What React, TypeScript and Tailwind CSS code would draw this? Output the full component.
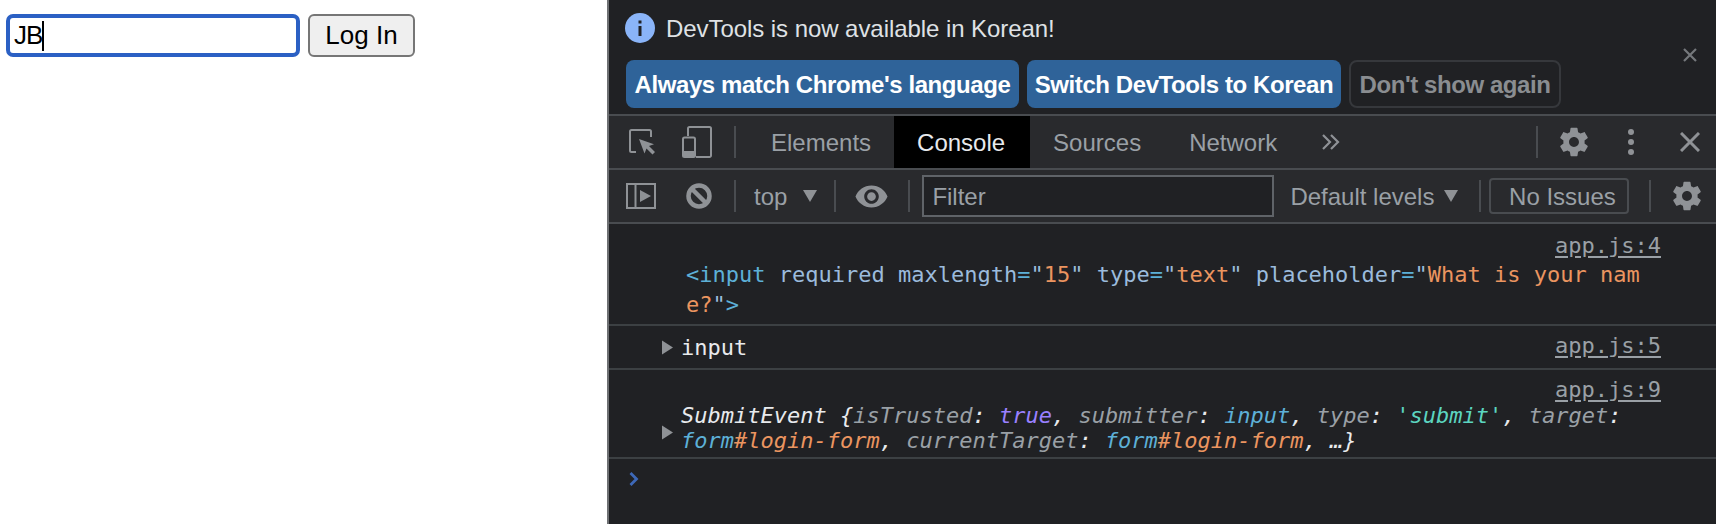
const GEAR =
  'M19.43 12.98c.04-.32.07-.64.07-.98s-.03-.66-.07-.98l2.11-1.65c.19-.15.24-.42.12-.64l-2-3.46c-.12-.22-.39-.3-.61-.22l-2.49 1c-.52-.4-1.08-.73-1.69-.98l-.38-2.65C14.46 2.18 14.25 2 14 2h-4c-.25 0-.46.18-.49.42l-.38 2.65c-.61.25-1.17.59-1.69.98l-2.49-1c-.23-.09-.49 0-.61.22l-2 3.46c-.13.22-.07.49.12.64l2.11 1.65c-.04.32-.07.65-.07.98s.03.66.07.98l-2.11 1.65c-.19.15-.24.42-.12.64l2 3.46c.12.22.39.3.61.22l2.49-1c.52.4 1.08.73 1.69.98l.38 2.65c.03.24.24.42.49.42h4c.25 0 .46-.18.49-.42l.38-2.65c.61-.25 1.17-.59 1.69-.98l2.49 1c.23.09.49 0 .61-.22l2-3.46c.12-.22.07-.49-.12-.64l-2.11-1.65zM12 15.5c-1.93 0-3.5-1.57-3.5-3.5s1.57-3.5 3.5-3.5 3.5 1.57 3.5 3.5-1.57 3.5-3.5 3.5z';

const ICON = '#8f9296';

function Gear({ className }: { className: string }) {
  return (
    <svg viewBox="0 0 24 24" className={className} fill={ICON}>
      <path d={GEAR} />
    </svg>
  );
}

function Divider({ className }: { className: string }) {
  return <div className={`w-[2px] h-[32px] bg-[#494c50] shrink-0 ${className}`} />;
}

function Caret({ className }: { className: string }) {
  return (
    <svg viewBox="0 0 14 12" className={`w-[14px] h-[12px] shrink-0 ${className}`} fill={ICON}>
      <path d="M0 0h14L7 12z" />
    </svg>
  );
}

function Expander({ className }: { className: string }) {
  return (
    <svg viewBox="0 0 11 14" className={`w-[11px] h-[15px] shrink-0 ${className}`} fill="#8f9296">
      <path d="M0 0l11 7-11 7z" />
    </svg>
  );
}

function SourceLink({ children }: { children: string }) {
  return <span className="underline text-[#9aa0a6] leading-[26px] underline-offset-[3px]">{children}</span>;
}

const Tag = ({ children }: { children: string }) => <span className="text-[#5db0d7]">{children}</span>;
const Attr = ({ children }: { children: string }) => <span className="text-[#9bbbdc]">{children}</span>;
const Val = ({ children }: { children: string }) => <span className="text-[#eb9560]">{children}</span>;
const Key = ({ children }: { children: string }) => <span className="text-[#9aa0a6]">{children}</span>;

export default function App() {
  return (
    <div className="flex w-[1716px] h-[524px] overflow-hidden bg-white font-['Liberation_Sans',Arial,sans-serif]">
      {/* Page */}
      <div className="w-[607px] shrink-0 flex items-start gap-[8px] pl-[6px] pt-[14px]">
        <div className="w-[294px] h-[43px] border-[4px] border-[#2b60c4] rounded-[7px] flex items-center pl-[4px] text-[26px] tracking-[-1px] text-black">
          JB
          <span className="w-[2px] h-[30px] bg-black" />
        </div>
        <button className="w-[107px] h-[43px] bg-[#efefef] border-2 border-[#767676] rounded-[6px] text-[26px] text-black">
          Log In
        </button>
      </div>

      {/* DevTools */}
      <div className="flex-1 flex flex-col bg-[#202124] border-l-2 border-[#6e7073]">
        {/* Language infobar */}
        <div className="h-[114px] shrink-0 flex text-[24px]">
          <div className="flex-1 flex flex-col">
            <div className="h-[60px] flex items-center pl-[16px] pb-[4px]">
              <svg viewBox="0 0 30 30" className="w-[30px] h-[30px] shrink-0">
                <circle cx="15" cy="15" r="15" fill="#8ab4f8" />
                <rect x="13.5" y="13" width="3" height="10" fill="#202124" />
                <rect x="13.5" y="7.5" width="3" height="3" fill="#202124" />
              </svg>
              <span className="ml-[11px] mt-[2px] text-[#dfe1e5] tracking-[-0.06px]">DevTools is now available in Korean!</span>
            </div>
            <div className="flex pl-[17px] gap-[8px] font-bold tracking-[-0.42px]">
              <button className="w-[393px] h-[48px] pt-[2px] rounded-[8px] bg-[#2f6399] text-white">Always match Chrome's language</button>
              <button className="w-[314px] h-[48px] pt-[2px] rounded-[8px] bg-[#2f6399] text-white">Switch DevTools to Korean</button>
              <button className="w-[212px] h-[48px] pt-[2px] rounded-[8px] border-2 border-[#36383c] text-[#8a8d91]">Don't show again</button>
            </div>
          </div>
          <svg viewBox="0 0 14 14" className="w-[14px] h-[14px] mt-[48px] mr-[19px]" stroke="#75787c" strokeWidth="2.2">
            <path d="M1 1l12 12M13 1L1 13" />
          </svg>
        </div>

        {/* Main tabs */}
        <div className="h-[56px] shrink-0 flex items-center bg-[#292a2d] border-y-2 border-[#494c50] text-[24px] text-[#9aa0a6]">
          <svg viewBox="0 0 26 26" className="w-[26px] h-[26px] ml-[20px] shrink-0" fill="none">
            <path d="M7 23H2.5a1.5 1.5 0 0 1-1.5-1.5V2.5A1.5 1.5 0 0 1 2.5 1h18A1.5 1.5 0 0 1 22 2.5V8" stroke={ICON} strokeWidth="2" />
            <path d="M10 10l15 5.2-5 1.8 6 6-2.5 2.5-6-6-2 5z" fill={ICON} />
          </svg>
          <svg viewBox="0 0 30 32" className="w-[30px] h-[32px] ml-[27px] shrink-0" fill="none">
            <path d="M6 10V2.5A1.5 1.5 0 0 1 7.5 1h20A1.5 1.5 0 0 1 29 2.5v27a1.5 1.5 0 0 1-1.5 1.5H14" stroke={ICON} strokeWidth="2" />
            <rect x="1" y="11.5" width="12" height="19.5" rx="1.5" stroke={ICON} strokeWidth="2" />
            <path d="M1 25h12v4.5A1.5 1.5 0 0 1 11.500 31h-9A1.500 1.500 0 0 1 1 29.500z" fill={ICON} />
          </svg>
          <Divider className="ml-[22px] mr-[11px]" />
          <div className="pl-6 pr-[23px] pt-[2px] h-full flex items-center">Elements</div>
          <div className="pl-[23px] pr-[25px] pt-[2px] h-full flex items-center bg-black text-[#e8eaed]">Console</div>
          <div className="pl-[23px] pr-6 pt-[2px] h-full flex items-center">Sources</div>
          <div className="px-6 pt-[2px] h-full flex items-center">Network</div>
          <svg viewBox="0 0 18 16" className="w-[18px] h-[16px] ml-[21px] shrink-0" fill="none" stroke={ICON} strokeWidth="2.2">
            <path d="M1 1l7 7-7 7M9 1l7 7-7 7" />
          </svg>
          <Divider className="ml-auto" />
          <Gear className="w-[34px] h-[34px] ml-[19px] shrink-0" />
          <div className="ml-[37px] flex flex-col gap-[4px] shrink-0">
            <div className="w-[6px] h-[6px] rounded-full bg-[#8f9296]" />
            <div className="w-[6px] h-[6px] rounded-full bg-[#8f9296]" />
            <div className="w-[6px] h-[6px] rounded-full bg-[#8f9296]" />
          </div>
          <svg viewBox="0 0 20 20" className="w-[20px] h-[20px] ml-[46px] mr-[16px] shrink-0" stroke={ICON} strokeWidth="3">
            <path d="M1 1l18 18M19 1L1 19" />
          </svg>
        </div>

        {/* Console toolbar */}
        <div className="h-[54px] shrink-0 flex items-center bg-[#292a2d] border-b-2 border-[#494c50] text-[24px] text-[#9aa0a6]">
          <svg viewBox="0 0 30 26" className="w-[30px] h-[26px] ml-[17px] shrink-0" fill="none">
            <rect x="1" y="1" width="28" height="24" stroke={ICON} strokeWidth="2" />
            <path d="M9.500 1v24" stroke={ICON} strokeWidth="2" />
            <path d="M14 7l11 6-11 6z" fill={ICON} />
          </svg>
          <svg viewBox="0 0 26 26" className="w-[26px] h-[26px] ml-[30px] shrink-0" fill="none" stroke={ICON} strokeWidth="4.500">
            <circle cx="13" cy="13" r="10.500" />
            <path d="M5.500 5.500l15 15" />
          </svg>
          <Divider className="ml-[22px]" />
          <span className="ml-[18px] mt-[2px]">top</span>
          <Caret className="ml-[16px]" />
          <Divider className="ml-[17px]" />
          <svg viewBox="0 0 24 24" className="w-[35px] h-[35px] ml-[18px] shrink-0" fill={ICON}>
            <path d="M12 4.500C7 4.500 2.730 7.610 1 12c1.730 4.390 6 7.500 11 7.500s9.270-3.110 11-7.500c-1.730-4.390-6-7.500-11-7.500zM12 17c-2.760 0-5-2.240-5-5s2.240-5 5-5 5 2.240 5 5-2.240 5-5 5zm0-8c-1.660 0-3 1.340-3 3s1.340 3 3 3 3-1.340 3-3-1.340-3-3-3z" />
          </svg>
          <Divider className="ml-[19px]" />
          <div className="ml-[12px] w-[352px] h-[42px] shrink-0 flex items-center bg-[#202124] border-2 border-[#5f6368] pl-[8px] pt-[2px]">Filter</div>
          <span className="ml-[16px] mt-[2px]">Default levels</span>
          <Caret className="ml-[10px]" />
          <Divider className="ml-[21px]" />
          <div className="ml-[8px] w-[140px] h-[36px] pl-[6px] pt-[2px] shrink-0 flex items-center justify-center border-2 border-[#494c50] rounded-[4px]">No Issues</div>
          <Divider className="ml-[20px]" />
          <Gear className="w-[34px] h-[34px] ml-[19px] shrink-0" />
        </div>

        {/* Console output */}
        <div className="flex-1 font-['DejaVu_Sans_Mono',monospace] text-[22px] text-[#e8eaed]">
          <div className="h-[102px] border-b-2 border-[#3c4043] pt-[5px]">
            <div className="h-[31px] text-right pr-[55px]">
              <SourceLink>app.js:4</SourceLink>
            </div>
            <div className="pl-[77px] leading-[30px] whitespace-pre">
              <Tag>{'<input'}</Tag> <Attr>required</Attr> <Attr>maxlength</Attr><Tag>=</Tag><Attr>"</Attr><Val>15</Val><Attr>"</Attr> <Attr>type</Attr><Tag>=</Tag><Attr>"</Attr><Val>text</Val><Attr>"</Attr> <Attr>placeholder</Attr><Tag>=</Tag><Attr>"</Attr><Val>What is your nam</Val>
              <br />
              <Val>e?</Val><Attr>"</Attr><Tag>{'>'}</Tag>
            </div>
          </div>

          <div className="h-[44px] border-b-2 border-[#3c4043] flex items-center pl-[53px] pr-[55px]">
            <Expander className="" />
            <span className="ml-[8px]">input</span>
            <span className="ml-auto mb-[4px]">
              <SourceLink>app.js:5</SourceLink>
            </span>
          </div>

          <div className="h-[89px] border-b-2 border-[#3c4043] pt-[3px]">
            <div className="h-[30px] text-right pr-[55px]">
              <SourceLink>app.js:9</SourceLink>
            </div>
            <div className="flex items-center pl-[53px]">
              <Expander className="mt-[8px]" />
              <div className="ml-[8px] leading-[25px] italic whitespace-pre">
                SubmitEvent {'{'}<Key>isTrusted</Key>: <span className="text-[#9980ff]">true</span>, <Key>submitter</Key>: <Tag>input</Tag>, <Key>type</Key>: <span className="text-[#5cd5c0]">'submit'</span>, <Key>target</Key>:
                <br />
                <Tag>form</Tag><Val>#login-form</Val>, <Key>currentTarget</Key>: <Tag>form</Tag><Val>#login-form</Val>, …{'}'}
              </div>
            </div>
          </div>

          <svg viewBox="0 0 11 14" className="w-[11px] h-[14px] ml-[20px] mt-[13px]" fill="none" stroke="#3d68b8" strokeWidth="2.800">
            <path d="M1.500 1l6 6-6 6" />
          </svg>
        </div>
      </div>
    </div>
  );
}
